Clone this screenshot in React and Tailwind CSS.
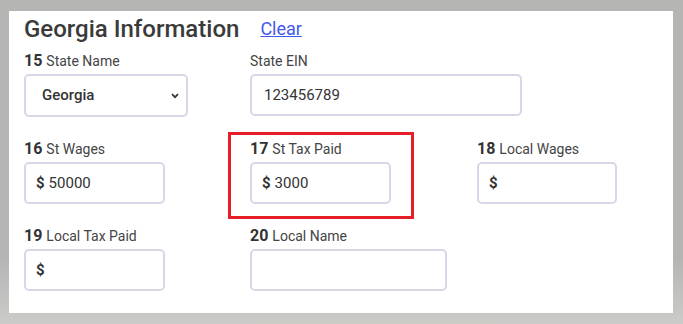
import React from "react";

const font = { fontFamily: "Roboto, 'Noto Sans', sans-serif" };

function Label({ num, text }) {
  return (
    <div className="h-[20px] leading-[20px] whitespace-nowrap text-[#444]">
      {num && <span className="text-[16px] font-bold text-[#333] mr-[4px]">{num}</span>}
      <span className="text-[14px]">{text}</span>
    </div>
  );
}

function MoneyInput({ width, value }) {
  return (
    <div
      className={`mt-[3px] h-[42px] ${width} border-2 border-[#d7d8e7] rounded-[5px] bg-white flex items-center pl-[10px] text-[15px] text-[#333]`}
    >
      <span className="font-bold">$</span>
      {value && <span className="ml-[4px]">{value}</span>}
    </div>
  );
}

export default function App() {
  return (
    <div
      className="w-[683px] h-[324px] bg-gradient-to-b from-[#b5b6b4] from-80% to-[#cbccc8] pt-[11px] pl-[9px] overflow-hidden"
      style={font}
    >
      <div className="w-[664px] h-[302px] bg-white pl-[15px] pt-[4px]">
        <div className="flex items-center h-[28px]">
          <h1 className="text-[24px] leading-[28px] font-medium text-[#3a3a3a]">Georgia Information</h1>
          <a href="#" className="ml-[21px] text-[18px] leading-[22px] text-[#4358ee] underline">
            Clear
          </a>
        </div>

        {/* Row 1 */}
        <div className="mt-[8px] grid grid-cols-[226px_1fr]">
          <div>
            <Label num="15" text="State Name" />
            <div className="relative mt-[3px] w-[164px] h-[43px]">
              <select
                defaultValue="Georgia"
                className="appearance-none w-full h-full border-2 border-[#d7d8e7] rounded-[5px] bg-white pl-[16px] text-[15px] font-medium text-[#333] outline-none"
                style={font}
              >
                <option>Georgia</option>
              </select>
              <svg
                className="absolute right-[9px] top-[19px] pointer-events-none"
                width="8"
                height="6"
                viewBox="0 0 8 6"
              >
                <path d="M1 1.2 L4 4.2 L7 1.2" fill="none" stroke="#333" strokeWidth="1.8" />
              </svg>
            </div>
          </div>
          <div>
            <Label text="State EIN" />
            <div className="mt-[3px] w-[272px] h-[42px] border-2 border-[#d7d8e7] rounded-[5px] flex items-center pl-[12px] text-[15px] text-[#333]">
              123456789
            </div>
          </div>
        </div>

        {/* Row 2 */}
        <div className="mt-[22px] grid grid-cols-[226px_227px_1fr]">
          <div>
            <Label num="16" text="St Wages" />
            <MoneyInput width="w-[141px]" value="50000" />
          </div>
          <div className="relative">
            <div className="absolute left-[-22px] top-[-7px] w-[186px] h-[87px] border-[3px] border-[#e61e28]" />
            <Label num="17" text="St Tax Paid" />
            <MoneyInput width="w-[141px]" value="3000" />
          </div>
          <div>
            <Label num="18" text="Local Wages" />
            <MoneyInput width="w-[140px]" />
          </div>
        </div>

        {/* Row 3 */}
        <div className="mt-[22px] grid grid-cols-[226px_1fr]">
          <div>
            <Label num="19" text="Local Tax Paid" />
            <MoneyInput width="w-[141px]" />
          </div>
          <div>
            <Label num="20" text="Local Name" />
            <div className="mt-[3px] w-[197px] h-[42px] border-2 border-[#d7d8e7] rounded-[5px]" />
          </div>
        </div>
      </div>
    </div>
  );
}
